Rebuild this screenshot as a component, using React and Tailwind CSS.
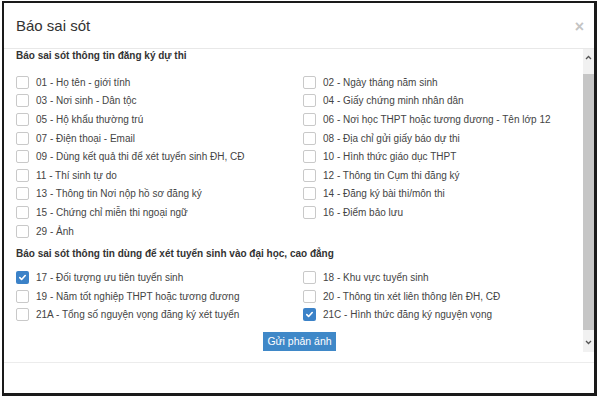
import React from 'react';

const SECTION_ONE = [
  ['01 - Họ tên - giới tính', '02 - Ngày tháng năm sinh'],
  ['03 - Nơi sinh - Dân tộc', '04 - Giấy chứng minh nhân dân'],
  ['05 - Hộ khẩu thường trú', '06 - Nơi học THPT hoặc tương đương - Tên lớp 12'],
  ['07 - Điện thoại - Email', '08 - Địa chỉ gửi giấy báo dự thi'],
  ['09 - Dùng kết quả thi để xét tuyển sinh ĐH, CĐ', '10 - Hình thức giáo dục THPT'],
  ['11 - Thí sinh tự do', '12 - Thông tin Cụm thi đăng ký'],
  ['13 - Thông tin Nơi nộp hồ sơ đăng ký', '14 - Đăng ký bài thi/môn thi'],
  ['15 - Chứng chỉ miễn thi ngoại ngữ', '16 - Điểm bảo lưu'],
  ['29 - Ảnh', null],
];

const SECTION_TWO = [
  ['17 - Đối tượng ưu tiên tuyển sinh', '18 - Khu vực tuyển sinh'],
  ['19 - Năm tốt nghiệp THPT hoặc tương đương', '20 - Thông tin xét liên thông lên ĐH, CĐ'],
  ['21A - Tổng số nguyện vọng đăng ký xét tuyển', '21C - Hình thức đăng ký nguyện vọng'],
];

const CHECKED = ['17 - Đối tượng ưu tiên tuyển sinh', '21C - Hình thức đăng ký nguyện vọng'];

function Checkbox({ checked }) {
  if (checked) {
    return (
      <span className="flex items-center justify-center w-[13px] h-[13px] rounded-[2px] bg-[#3b82c8] shrink-0">
        <svg width="9" height="9" viewBox="0 0 10 10" fill="none">
          <path d="M2 5.2l2 2L8 2.8" stroke="#fff" strokeWidth="1.8" strokeLinecap="round" strokeLinejoin="round" />
        </svg>
      </span>
    );
  }
  return <span className="block w-[13px] h-[13px] rounded-[2px] border border-[#c9c9c9] bg-white shrink-0" />;
}

function Option({ label }) {
  if (!label) return <div />;
  return (
    <label className="flex items-center h-[18.6px] gap-[7px] text-[10px] text-[#444] whitespace-nowrap">
      <Checkbox checked={CHECKED.includes(label)} />
      <span>{label}</span>
    </label>
  );
}

function Section({ title, rows, gap }) {
  return (
    <div>
      <div className="h-[14px] leading-[14px] text-[10px] font-bold text-[#333]">{title}</div>
      <div className={`${gap} grid grid-cols-2 gap-x-[7px]`}>
        {rows.map(([a, b], i) => (
          <React.Fragment key={i}>
            <Option label={a} />
            <Option label={b} />
          </React.Fragment>
        ))}
      </div>
    </div>
  );
}

function Scrollbar() {
  return (
    <div className="w-[11px] flex flex-col bg-[#f1f1f1] shrink-0">
      <div className="h-[16px] flex items-center justify-center">
        <svg width="7" height="5" viewBox="0 0 7 5">
          <path d="M1 4l2.5-2.5L6 4" stroke="#555" strokeWidth="1.3" fill="none" />
        </svg>
      </div>
      <div className="flex-1 mt-[9px] mb-[2px] bg-[#c6c6c6]" />
      <div className="h-[20px] flex items-center justify-center">
        <svg width="7" height="5" viewBox="0 0 7 5">
          <path d="M1 1l2.5 2.5L6 1" stroke="#555" strokeWidth="1.3" fill="none" />
        </svg>
      </div>
    </div>
  );
}

export default function App() {
  return (
    <div className="w-[600px] h-[400px] bg-white pt-[1px] pl-[2px]" style={{ fontFamily: '"Liberation Sans", Arial, sans-serif' }}>
      <div className="w-[595px] h-[395px] border-2 border-r-[3px] border-b-[3px] border-[#1a1a1a] bg-white flex flex-col">
        <div className="h-[46px] shrink-0 flex items-center justify-between pl-[12px] pr-[10px] border-b border-[#e8e8e8]">
          <span className="text-[15px] text-[#333] mt-[2px]">Báo sai sót</span>
          <span className="text-[16px] font-bold text-[#c4c4c4] leading-none mt-[2px]">×</span>
        </div>
        <div className="h-[314px] shrink-0 flex border-b border-[#ececec]">
          <div className="flex-1 flex pb-[10px]">
            <div className="flex-1 pl-[12px]">
              <Section title="Báo sai sót thông tin đăng ký dự thi" rows={SECTION_ONE} gap="mt-[10px]" />
              <div className="mt-[7px]">
                <Section title="Báo sai sót thông tin dùng để xét tuyển sinh vào đại học, cao đẳng" rows={SECTION_TWO} gap="mt-[7px]" />
              </div>
              <div className="mt-[8px] flex justify-center">
                <button className="h-[19px] px-[4px] bg-[#3f88c8] text-white text-[10.5px] leading-none">Gửi phản ánh</button>
              </div>
            </div>
            <Scrollbar />
          </div>
        </div>
        <div className="flex-1" />
      </div>
    </div>
  );
}
